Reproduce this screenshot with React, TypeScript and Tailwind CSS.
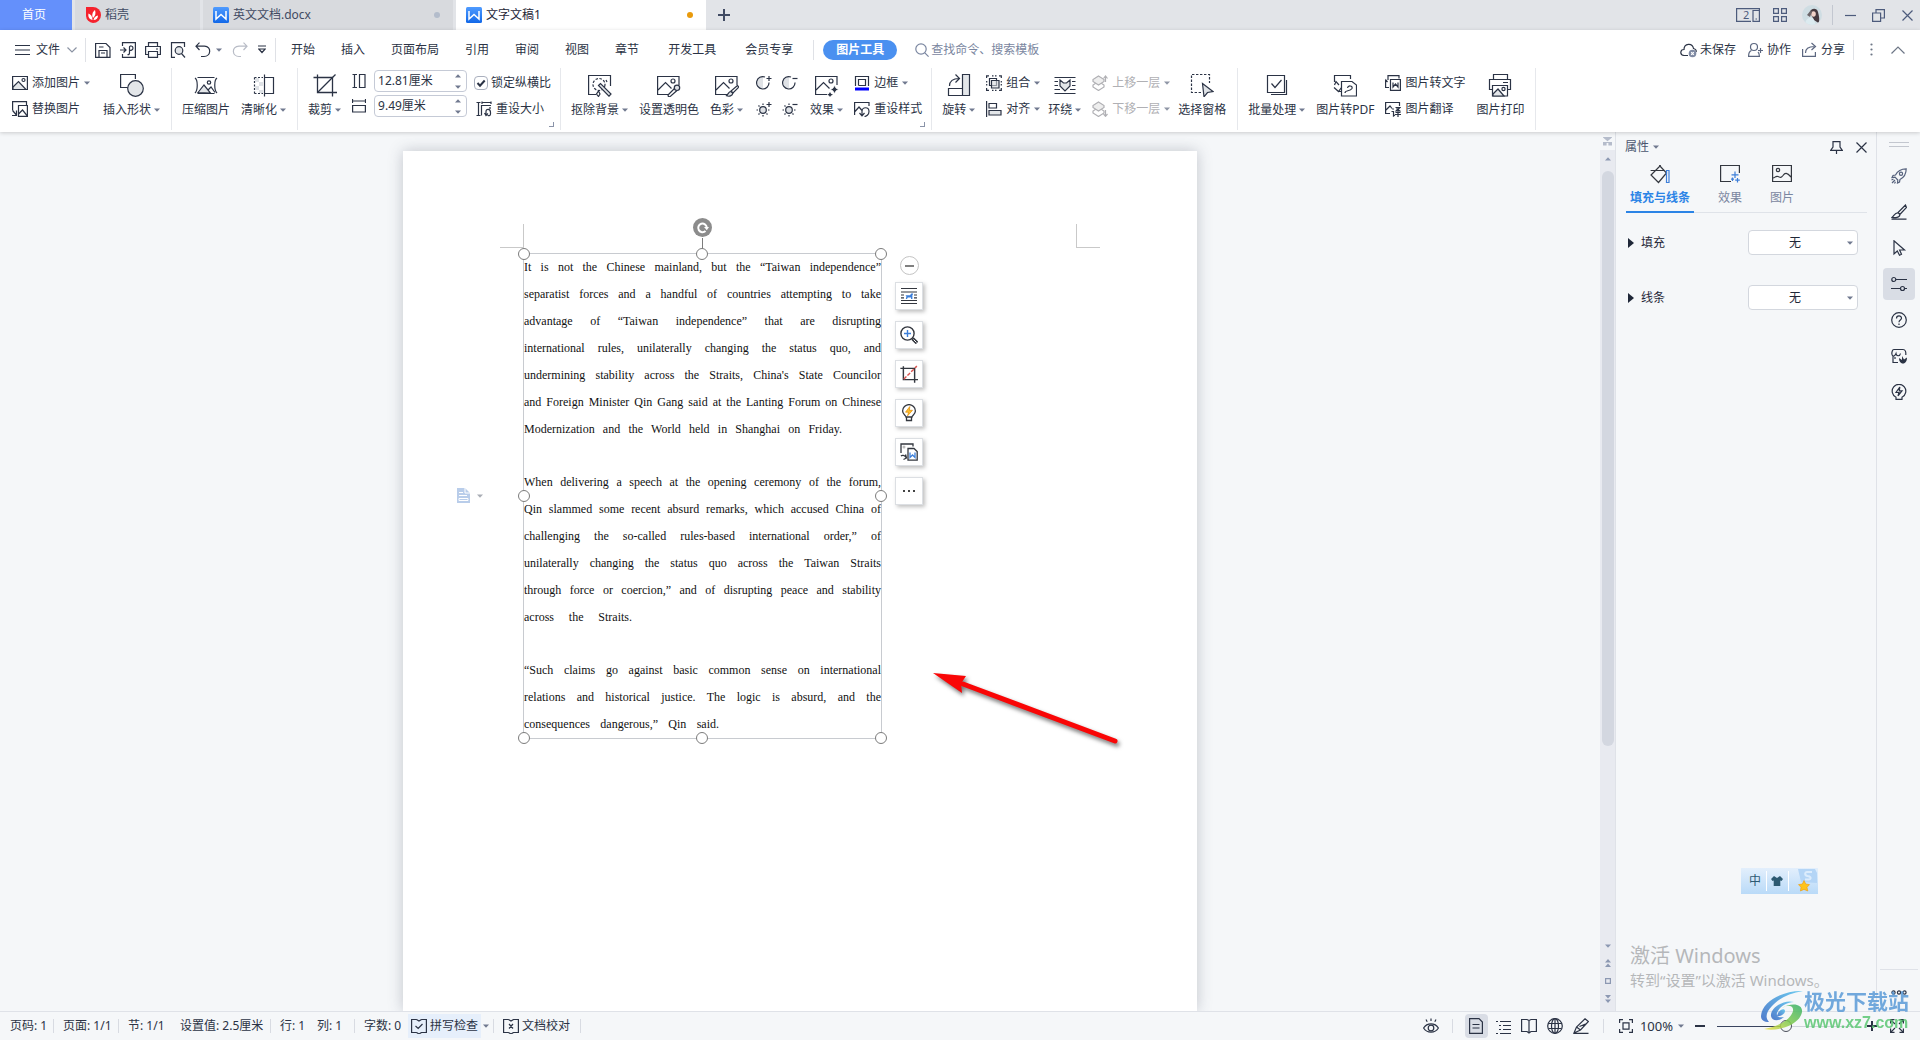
import React from "react";

type IconProps = { w?: number; h?: number; children: React.ReactNode; className?: string; sw?: number };

const Svg = ({ w = 16, h = w, children, className = "", sw = 1.2 }: IconProps) => (
  <svg
    width={w}
    height={h}
    viewBox={`0 0 ${w} ${h}`}
    fill="none"
    stroke="currentColor"
    strokeWidth={sw}
    className={`shrink-0 ${className}`}
    aria-hidden="true"
  >
    {children}
  </svg>
);

const Caret = ({ className = "text-[#70798f]" }: { className?: string }) => (
  <svg width="6" height="4" viewBox="0 0 6 4" className={`shrink-0 ${className}`} aria-hidden="true">
    <path d="M0 0.5H6L3 3.8Z" fill="currentColor" />
  </svg>
);

/* ---------- large ribbon icons (24 x 24) ---------- */
const ShapesIcon = () => (
  <Svg w={24}>
    <path d="M8 14.5H0.6V1.5H15.4V6" />
    <circle cx="15.5" cy="15.5" r="7.8" fill="#e3e6e9" />
  </Svg>
);
const CompressIcon = () => (
  <Svg w={24}>
    <path d="M1 5C4 7 4 17 1 20M23 5C20 7 20 17 23 20" />
    <path d="M3.5 4.5H20.5M3.5 20.5H20.5" />
    <path d="M4 19.5L10 12L16.5 20Z" fill="#e3e6e9" />
    <path d="M14 17L17 14L21 19.5" />
    <circle cx="15" cy="9.5" r="1.7" />
  </Svg>
);
const SharpenIcon = () => (
  <Svg w={24}>
    <path d="M2.5 4.5H11M2.5 20.5H11M2.5 4.5V20.5" strokeDasharray="2 1.5" />
    <path d="M3 5H7V9H3ZM7 9H11V13H7ZM3 13H7V17H3ZM7 17H11V20H7Z" fill="#dfe2e6" stroke="none" />
    <path d="M12.5 4.5H21.5V20.5H12.5M12.5 1.5V23.5" />
  </Svg>
);
const CropIcon = ({ diag = "currentColor", s = 24, dash }: { diag?: string; s?: number; dash?: string }) => (
  <svg width={s} height={s} viewBox="0 0 24 24" fill="none" stroke="currentColor" strokeWidth={s < 24 ? 1.9 : 1.3} aria-hidden="true">
    <path d="M0.5 4.5H19.5V23.5M4.5 1.5V19.5H24" />
    <path d="M5 19L22.5 1.5" stroke={diag} strokeDasharray={dash} />
  </svg>
);
const CutoutIcon = () => (
  <Svg w={24}>
    <path d="M8 21.5H0.6V2.5H22.5V13" />
    <circle cx="11" cy="11.5" r="6" strokeDasharray="2.5 1.5" />
    <path d="M10.5 12.5L12.5 10.5L23 21L21 23.2Z" fill="#e3e6e9" />
    <path d="M10.5 18L12 21L10.5 23.5L8.5 21ZM18 7L19 9" />
  </Svg>
);
const PictureBase = () => (
  <>
    <path d="M12 21.5H0.6V3.5H22V12" />
    <path d="M1 17L8.5 9.5L14.5 15.5" />
    <circle cx="16" cy="8" r="2" />
  </>
);
const TransparentIcon = () => (
  <Svg w={24}>
    <PictureBase />
    <path d="M17.5 15.5L11 22L11.5 24L13.5 23.3L20 17.5" fill="#fff" />
    <circle cx="20" cy="14.8" r="2.7" fill="#dfe2e6" />
  </Svg>
);
const ColorIcon = () => (
  <Svg w={24}>
    <PictureBase />
    <path d="M22.5 12.5L16 18L18 20L24 14Z" fill="#fff" />
    <path d="M16 18.5C13.5 18.5 13.5 21 11.5 22.8C14 23.8 17.5 23 17.8 20.2Z" fill="#e3e6e9" />
  </Svg>
);
const EffectIcon = () => (
  <Svg w={24}>
    <PictureBase />
    <path d="M19.5 12.5L21 15.2L23.5 16.5L21 17.8L19.5 20.5L18 17.8L15.5 16.5L18 15.2Z" fill="#2b3345" stroke="#fff" strokeWidth=".6" />
    <path d="M15 19L16 20.8L18 21.7L16 22.6L15 24L14 22.6L12.2 21.7L14 20.8Z" fill="#2b3345" stroke="none" />
  </Svg>
);
const RotateIcon = () => (
  <Svg w={24}>
    <path d="M15.5 1.5H22.5V22.5H15.5Z" fill="#e3e6e9" />
    <path d="M15.5 15.5H1.5V22.5H15.5M2.5 13C2.5 8 6 5.5 12 5.5M8.5 1.5L12.5 5.5L8.5 9.5" />
  </Svg>
);
const WrapIcon = () => (
  <Svg w={24}>
    <path d="M1.5 4.5H22.5M1.5 8.5H5M19 8.5H22.5M1.5 12.5H5M19 12.5H22.5M1.5 16.5H7M17 16.5H22.5M1.5 20.5H22.5" />
    <path d="M7 7L10.5 10H13.5L17 7V13L12 18L7 13Z" fill="#e3e6e9" />
  </Svg>
);
const SelectPaneIcon = () => (
  <Svg w={24}>
    <path d="M11 19.5H1.5V1.5H19.5V10" strokeDasharray="2.4 1.6" />
    <path d="M12.5 10.5L23 18.5L17.5 19.5L14 23.8Z" fill="#dfe2e6" />
  </Svg>
);
const BatchIcon = () => (
  <Svg w={24}>
    <path d="M2.5 2.5H19.5V19.5H2.5Z" />
    <path d="M21.5 7V21.5H6" />
    <path d="M6.5 10.5L10 14.5L16.5 7" />
  </Svg>
);
const ToPdfIcon = () => (
  <Svg w={24}>
    <path d="M1.5 9V2.5H17.5V6M9 18.5H6M1.5 12L3 8.5L6 12M1 14.5L5.5 18.5L8.5 14.5" />
    <path d="M8.5 8.5H19L23.5 12V23H8.5Z" fill="#fff" />
    <path d="M12 20C12 16.5 17 19 19 15.5C20 12.5 15 12 14.5 15" />
  </Svg>
);
const PrintPicIcon = () => (
  <Svg w={24}>
    <path d="M5.5 6.5V1.5H19.5V6.5M4.5 16.5H1.5V6.5H22.5V16.5H20M15 9.5H20" />
    <path d="M4.5 12.5H19.5V23H4.5Z" fill="#fff" />
    <path d="M5 21L10 16L16 23H5Z" fill="#e3e6e9" />
    <circle cx="15.5" cy="16" r="1.6" />
  </Svg>
);

/* ---------- small ribbon icons (16 x 16) ---------- */
const AddPicIcon = () => (
  <Svg>
    <path d="M0.6 1.5H15.4V14.5H0.6Z" />
    <path d="M1 12L6.5 6.5L14 14.5H1Z" fill="#e3e6e9" />
    <circle cx="11.5" cy="5" r="1.5" />
  </Svg>
);
const ReplacePicIcon = () => (
  <Svg>
    <path d="M0.6 9.5V0.6H14.5V4" />
    <path d="M6.5 4.5H15.4V15.4H6.5Z" fill="#fff" />
    <path d="M6.5 13L10.5 9L15.4 15M0.6 9.5L4 13.5M4.5 9.5V14.5H0" />
  </Svg>
);
const HeightIcon = () => (
  <Svg w={14} h={18}>
    <path d="M0.5 2.5H5M0.5 15.5H5M2.5 2.5V15.5M7.5 2.5H13V15.5H7.5Z" />
  </Svg>
);
const WidthIcon = () => (
  <Svg w={14} h={18}>
    <path d="M0.5 2V6M13.5 2V6M0.5 4H13.5M0.6 8.5H13.4V15H0.6Z" />
  </Svg>
);
const ResetSizeIcon = () => (
  <Svg>
    <path d="M0.5 1.5H4.5M0.5 14.5H4.5M2.5 1.5V14.5M5.5 14.5V4.5H15M6 0.5V3M15 0.5V3M6 1.5H15M14 6V8" />
    <path d="M10 14.5V10.5C10 7.5 14.5 7.5 14.5 11.5V13C14.5 15 12 15.2 12 14M8.5 12L10 14.5L12 12.5" />
  </Svg>
);
const ContrastIcon = ({ plus }: { plus?: boolean }) => (
  <Svg>
    <path d="M7 2A6 6 0 0 0 7 14Z" fill="#dfe2e6" stroke="none" />
    <path d="M9 2A6.2 6.2 0 1 0 13 7.5" />
    <path d={plus ? "M10.5 3.5H15.5M13 1V6" : "M10.5 3.5H15.5"} />
  </Svg>
);
const BrightnessIcon = ({ plus }: { plus?: boolean }) => (
  <Svg>
    <circle cx="7" cy="9" r="3.3" fill="#dfe2e6" />
    <path d="M7 2.5V4M7 14V15.5M0.5 9H2M12 9H13.5M2.5 4.5L3.5 5.5M2.5 13.5L3.5 12.5M11.5 13.5L10.5 12.5" />
    <path d={plus ? "M10.5 3.5H15.5M13 1V6" : "M10.5 3.5H15.5"} />
  </Svg>
);
const BorderIcon = () => (
  <Svg>
    <path d="M1.5 11V1.5H14.5V11M4.5 10.5V4.5H11.5V10.5H4.5" />
    <path d="M1 14H15" stroke="#0000ff" strokeWidth="3" />
  </Svg>
);
const ResetStyleIcon = () => (
  <Svg>
    <path d="M0.6 14V1.5H15V5M1 10.5L5 6L8 9.5" />
    <path d="M8 14.5V10.5C8 5.5 15 5.5 15 10.5C15 14 12 15.5 10.5 15.5M5.5 12L8 14.8L10.5 12" />
  </Svg>
);
const GroupIcon = () => (
  <Svg>
    <path d="M3.5 3.5H10.5V10.5H3.5Z" />
    <path d="M5.5 5.5H13V13H5.5Z" fill="#d5d9de" fillOpacity=".6" />
    <path d="M0.6 3V0.8H3M13 0.8H15.3V3M15.3 13V15.3H13M3 15.3H0.6V13M6 0.8H7.5M9 0.8H10.5M0.7 6V7.5M0.7 9V10.5M15.3 6V7.5M15.3 9V10.5M6 15.3H7.5M9 15.3H10.5" />
  </Svg>
);
const AlignIcon = () => (
  <Svg>
    <path d="M0.6 0V16M3 2.5H10.5V7H3Z" />
    <path d="M3 9.5H15V14H3Z" fill="#e3e6e9" />
  </Svg>
);
const LayerIcon = ({ up }: { up?: boolean }) => (
  <Svg>
    <path d="M6.5 6.5L12 10V12L6.5 15.5L1 12V10Z" fill={up ? "none" : "#fff"} />
    <path d="M6.5 1L12 4.5V6.5L6.5 10L1 6.5V4.5Z" fill="#eeeeee" />
    <path d={up ? "M13.5 7V1.5M11.5 3.5L13.5 1L15.5 3.5" : "M13.5 9V15M11.5 13L13.5 15.3L15.5 13"} />
  </Svg>
);
const ToWordIcon = () => (
  <Svg>
    <path d="M3 5V0.6H14V3.5M0.6 5V13M2.5 7L0.8 5L0 7M4 12.5H0.6" />
    <path d="M5.5 4.5H15.4V15.4H5.5Z" fill="#fff" />
    <path d="M8 7.5V12L10.5 9L13 12V7.5" />
  </Svg>
);
const TranslatePicIcon = () => (
  <Svg>
    <path d="M5 12.5H0.6V1.5H14.5V5M1 9L5 5L7 7.5" />
    <path d="M7.5 7.5L8.5 8.5M6.5 10.5H8.5V15L10 14M10.5 6.5H15L10.5 10.5M11.5 7.5L15.5 10.5M13 9.5V16M10.5 11.5H15.5M10 13.5H16" />
  </Svg>
);

/* ---------- brand marks ---------- */
const WpsLogo = () => (
  <svg width="16" height="16" viewBox="0 0 16 16" aria-hidden="true" className="shrink-0">
    <defs>
      <linearGradient id="wps" x1="0" y1="0" x2="0" y2="1">
        <stop offset="0" stopColor="#4f9bff" />
        <stop offset="1" stopColor="#1268e8" />
      </linearGradient>
    </defs>
    <rect width="16" height="16" rx="1.5" fill="url(#wps)" />
    <path d="M3 4V12L8 7.5L13 12V4" fill="none" stroke="#fff" strokeWidth="1.5" />
  </svg>
);
const DaokeLogo = () => (
  <svg width="16" height="16" viewBox="0 0 16 16" aria-hidden="true" className="shrink-0">
    <path d="M1 0H8A8 8 0 0 1 8 16A7.5 7.5 0 0 1 1 9Z" fill="#f5222d" />
    <path d="M7.5 13C3.5 12 3 9 3.5 6.5C6 7.5 7.5 9.5 7.5 13ZM8 11C6.5 8 7.5 5 10 3C11 6 10.5 9 8 11ZM8.5 13C9 10.5 10.5 9 13 8.5C13 11 11.5 13 8.5 13Z" fill="#fff" />
  </svg>
);

/* ---------- building blocks ---------- */
const Big = ({ icon, label, caret }: { icon: React.ReactNode; label: string; caret?: boolean }) => (
  <button type="button" className="flex shrink-0 flex-col items-center gap-[5px] pt-[5px]">
    <span className="flex h-6 items-center">{icon}</span>
    <span className="flex items-center gap-[3px] leading-4 whitespace-nowrap">
      {label}
      {caret && <Caret />}
    </span>
  </button>
);

const Small = ({ icon, label, caret, disabled }: { icon: React.ReactNode; label: string; caret?: boolean; disabled?: boolean }) => (
  <button
    type="button"
    disabled={disabled}
    className={`flex h-[22px] items-center gap-1 whitespace-nowrap ${disabled ? "text-[#b0b0b4]" : ""}`}
  >
    {icon}
    <span>{label}</span>
    {caret && <Caret className={disabled ? "text-[#8f96a6]" : "text-[#70798f]"} />}
  </button>
);

const Stack = ({ className = "", children }: { className?: string; children: React.ReactNode }) => (
  <div className={`flex shrink-0 flex-col gap-1 pt-1 ${className}`}>{children}</div>
);

const Sep = () => <div className="-mr-px h-[62px] w-px shrink-0 bg-[#e6e8ec]" />;

const Corner = () => (
  <span className="absolute top-[54px] -right-[5px] h-[5px] w-[5px] border-r border-b border-[#8a93a8]" />
);

const SizeField = ({ id, label, value, icon }: { id: string; label: string; value: string; icon: React.ReactNode }) => (
  <div className="flex h-[22px] items-center gap-2">
    <label htmlFor={id} aria-label={label}>{icon}</label>
    <div className="flex h-[22px] w-[93px] items-center rounded-sm border border-[#c5cad6] bg-white">
      <input id={id} defaultValue={value} className="min-w-0 flex-1 pl-[3px] outline-none" />
      <div className="flex w-4 flex-col items-center gap-[7px]">
        <button type="button" aria-label={`增大${label}`} className="rotate-180"><Caret /></button>
        <button type="button" aria-label={`减小${label}`}><Caret /></button>
      </div>
    </div>
  </div>
);

const Ribbon = () => (
  <div className="flex h-16 items-start gap-[11px] overflow-hidden pl-3">
    <Stack className="w-[80px]">
      <Small icon={<AddPicIcon />} label="添加图片" caret />
      <Small icon={<ReplacePicIcon />} label="替换图片" />
    </Stack>
    <Big icon={<ShapesIcon />} label="插入形状" caret />
    <Sep />
    <Big icon={<CompressIcon />} label="压缩图片" />
    <Big icon={<SharpenIcon />} label="清晰化" caret />
    <Sep />
    <Big icon={<CropIcon />} label="裁剪" caret />
    <div className="relative flex w-[197px] shrink-0 gap-[7px]">
      <div className="flex flex-col gap-[3px] pt-0.5">
        <SizeField id="h" label="高度" value="12.81厘米" icon={<HeightIcon />} />
        <SizeField id="w" label="宽度" value="9.49厘米" icon={<WidthIcon />} />
      </div>
      <Stack>
        <label className="flex h-[22px] items-center gap-[3px] whitespace-nowrap">
          <span className="relative flex h-[14px] w-[14px]">
            <input type="checkbox" defaultChecked className="h-[14px] w-[14px] appearance-none rounded-sm border border-[#aab0be] bg-white" />
            <Svg w={14} className="pointer-events-none absolute inset-0" sw={2}>
              <path d="M3.5 7L6 9.7L10.7 4.5" />
            </Svg>
          </span>
          锁定纵横比
        </label>
        <div className="pl-0.5">
          <Small icon={<ResetSizeIcon />} label="重设大小" />
        </div>
      </Stack>
      <Corner />
    </div>
    <Sep />
    <Big icon={<CutoutIcon />} label="抠除背景" caret />
    <Big icon={<TransparentIcon />} label="设置透明色" />
    <Big icon={<ColorIcon />} label="色彩" caret />
    <div className="grid w-[45px] shrink-0 grid-cols-2 gap-x-[9px] gap-y-1 pt-1 pl-0.5">
      <button type="button" aria-label="增加对比度" className="flex h-[22px] items-center"><ContrastIcon plus /></button>
      <button type="button" aria-label="降低对比度" className="flex h-[22px] items-center"><ContrastIcon /></button>
      <button type="button" aria-label="增加亮度" className="flex h-[22px] items-center"><BrightnessIcon plus /></button>
      <button type="button" aria-label="降低亮度" className="flex h-[22px] items-center"><BrightnessIcon /></button>
    </div>
    <Big icon={<EffectIcon />} label="效果" caret />
    <div className="relative w-[66px] shrink-0">
      <Stack>
        <Small icon={<BorderIcon />} label="边框" caret />
        <Small icon={<ResetStyleIcon />} label="重设样式" />
      </Stack>
      <Corner />
    </div>
    <Sep />
    <Big icon={<RotateIcon />} label="旋转" caret />
    <Stack className="w-[51px]">
      <Small icon={<GroupIcon />} label="组合" caret />
      <Small icon={<AlignIcon />} label="对齐" caret />
    </Stack>
    <Big icon={<WrapIcon />} label="环绕" caret />
    <Stack className="w-[75px]">
      <Small icon={<LayerIcon up />} label="上移一层" caret disabled />
      <Small icon={<LayerIcon />} label="下移一层" caret disabled />
    </Stack>
    <Big icon={<SelectPaneIcon />} label="选择窗格" />
    <Sep />
    <Big icon={<BatchIcon />} label="批量处理" caret />
    <Big icon={<ToPdfIcon />} label="图片转PDF" />
    <Stack>
      <Small icon={<ToWordIcon />} label="图片转文字" />
      <Small icon={<TranslatePicIcon />} label="图片翻译" />
    </Stack>
    <Big icon={<PrintPicIcon />} label="图片打印" />
    <Sep />
  </div>
);

const TitleBar = () => (
  <header className="flex h-[30px] shrink-0 items-stretch bg-[#e2e4e8] text-[#414b63]">
    <button type="button" className="w-[72px] bg-[#6490fb] pr-1 text-white">首页</button>
    <button type="button" className="ml-[3px] flex w-[125px] items-center gap-1 bg-[#d8dade] pl-[10px]">
      <DaokeLogo />
      <span>稻壳</span>
    </button>
    <button type="button" className="ml-[3px] flex w-[250px] items-center gap-1 bg-[#d8dade] px-[10px]">
      <WpsLogo />
      <span>英文文档.docx</span>
      <span className="mr-[3px] ml-auto h-1.5 w-1.5 rounded-full bg-[#b3bccb]" />
    </button>
    <button type="button" className="ml-[3px] flex w-[250px] items-center gap-1 bg-white px-[10px] text-[#1f2738]">
      <WpsLogo />
      <span>文字文稿1</span>
      <span className="mr-[3px] ml-auto h-1.5 w-1.5 rounded-full bg-[#e99a0c]" />
    </button>
    <button type="button" aria-label="新建" className="ml-3 flex items-center">
      <Svg w={12} sw={2}><path d="M6 0V12M0 6H12" /></Svg>
    </button>
    <div className="ml-auto flex items-center text-[#4d5b7c]">
      <button type="button" aria-label="双页窗口" className="relative flex">
        <Svg w={24} h={14}>
          <path d="M15 13.4H0.6V0.6H23.4V13.4H17V2.5H23M19.5 11H21" />
        </Svg>
        <span className="absolute top-0 left-[7px] text-[11px] leading-[14px]">2</span>
      </button>
      <button type="button" aria-label="应用" className="ml-[13px]">
        <Svg w={14}>
          <path d="M0.6 0.6H5.4V5.4H0.6ZM8.6 0.6H13.4V5.4H8.6ZM0.6 8.6H5.4V13.4H0.6ZM8.6 8.6H13.4V13.4H8.6Z" />
        </Svg>
      </button>
      <button type="button" aria-label="账户" className="ml-[15px]">
        <svg width="20" height="20" viewBox="0 0 20 20" aria-hidden="true">
          <clipPath id="av"><circle cx="10" cy="10" r="10" /></clipPath>
          <g clipPath="url(#av)">
            <rect width="20" height="20" fill="#cfdde3" />
            <path d="M8 8C8 3 15 2 16 7C17 11 18 15 16.5 18L12 15Z" fill="#453a40" />
            <ellipse cx="11.5" cy="9" rx="2.3" ry="2.8" fill="#f0d2c8" />
            <path d="M3 20C3 14 8 11 11 13L14 20Z" fill="#dcebf0" />
            <path d="M5 10L9 5L10 7L8 12Z" fill="#6a6468" />
          </g>
        </svg>
      </button>
      <span className="ml-[10px] h-5 w-px bg-[#c3c7d0]" />
      <button type="button" aria-label="最小化" className="ml-3 flex">
        <Svg w={11} sw={1.2}><path d="M0 5.5H11" /></Svg>
      </button>
      <button type="button" aria-label="还原" className="ml-4">
        <Svg w={13}><path d="M0.6 4H8.6V12.4H0.6ZM4 4V0.6H12.4V9H8.6" /></Svg>
      </button>
      <button type="button" aria-label="关闭" className="mr-[7px] ml-[17px]">
        <Svg w={11}><path d="M0.5 0.5L10.5 10.5M10.5 0.5L0.5 10.5" /></Svg>
      </button>
    </div>
  </header>
);

const MenuBar = () => (
  <nav className="flex h-[38px] items-center pt-px whitespace-nowrap">
    <button type="button" className="ml-[15px] flex items-center gap-1.5">
      <Svg w={15} h={12}><path d="M0 1.5H15M0 6H15M0 10.5H15" /></Svg>
      文件
      <Svg w={10} h={6} className="ml-px text-[#8b93a3]"><path d="M0.5 0.5L5 5L9.5 0.5" /></Svg>
    </button>
    <span className="ml-[8px] h-6 w-px bg-[#dfe1e6]" />
    <button type="button" aria-label="保存" className="ml-[9px]">
      <Svg><path d="M0.6 1.5H11L15 5.5V15.4H0.6ZM4 15V8.5H12V15M4 5H8.5M6 11H10" /></Svg>
    </button>
    <button type="button" aria-label="输出为PDF" className="ml-[9px]">
      <Svg><path d="M2.5 4V0.6H15.4V15.4H2.5V12M0 8H5.5M3.5 5.5L6 8L3.5 10.5M7.5 12.5C9 13 9.5 12 9.5 10.5V5C9.5 3.5 13 3.5 13 6C13 8.5 10.5 8.5 9.5 8" /></Svg>
    </button>
    <button type="button" aria-label="打印" className="ml-[9px]">
      <Svg><path d="M3.5 4.5V0.6H12.5V4.5M3.5 12.5H0.6V4.5H15.4V12.5H12.5M3.5 9.5H12.5V15.4H3.5ZM11 7H13" /></Svg>
    </button>
    <button type="button" aria-label="打印预览" className="ml-[9px]">
      <Svg>
        <path d="M5 15.4H1.5V0.6H14.5V5" />
        <circle cx="9" cy="8.5" r="3.8" fill="#e3e6e9" />
        <path d="M11.5 11.5L15 15.5" />
      </Svg>
    </button>
    <button type="button" aria-label="撤销" className="ml-[9px] flex items-center gap-[5px]">
      <Svg><path d="M4.5 0.6L1 4.2L4.5 8M1 4.2H9.5C17 4.5 16 14.5 9 14.5H6" /></Svg>
      <Caret />
    </button>
    <button type="button" aria-label="恢复" className="ml-[10px] text-[#b8bcc6]">
      <Svg><path d="M11.5 0.6L15 4.2L11.5 8M15 4.2H7C-1 4.5 0 14.5 7 14.5H9" /></Svg>
    </button>
    <button type="button" aria-label="更多" className="ml-[10px]">
      <Svg w={8} h={9}><path d="M0 1H8M0.8 4L4 7.5L7.2 4Z" /></Svg>
    </button>
    <span className="ml-[9px] h-6 w-px bg-[#dfe1e6]" />
    <div className="ml-[15px] flex items-center gap-[26px]">
      {["开始", "插入", "页面布局", "引用", "审阅", "视图", "章节"].map((t) => (
        <button key={t} type="button">{t}</button>
      ))}
      <button type="button" className="ml-[3px]">开发工具</button>
      <button type="button" className="ml-[3px]">会员专享</button>
    </div>
    <span className="ml-[20px] h-5 w-px bg-[#dfe1e6]" />
    <button type="button" className="ml-[9px] h-5 w-[74px] rounded-full bg-[#4a90f0] font-bold text-white">图片工具</button>
    <label className="ml-[18px] flex items-center gap-0.5 text-[#7a86a0]">
      <Svg w={14}><circle cx="6" cy="6" r="5.2" /><path d="M9.8 9.8L13.6 13.6" /></Svg>
      <input aria-label="查找命令" placeholder="查找命令、搜索模板" className="w-40 outline-none placeholder:text-[#7a86a0]" />
    </label>
    <div className="ml-auto flex items-center">
      <button type="button" className="flex items-center gap-[3px]">
        <Svg w={17} h={16}>
          <path d="M8 13.5H4C-0.5 13 0 7.5 4 7.5C4 1 12.5 0.5 13.5 6.5C16 7 16.5 9 16 10" />
          <circle cx="12.5" cy="11.5" r="3.8" fill="#7f8aa3" stroke="none" />
          <path d="M11.2 10.2L13.8 12.8M13.8 10.2L11.2 12.8" stroke="#fff" />
        </Svg>
        未保存
      </button>
      <button type="button" className="ml-3 flex items-center gap-1">
        <Svg w={15} className="text-[#5c6780]">
          <circle cx="6" cy="5" r="3.5" />
          <path d="M3.5 8.5C0.5 9.5 0.6 12 0.6 14.4H11.4C11.4 12.5 11.2 11 10 10M10 8.5H15M12.5 6V11" />
        </Svg>
        协作
      </button>
      <button type="button" className="ml-[11px] flex items-center gap-1">
        <Svg w={15} className="text-[#5c6780]">
          <path d="M0.6 7V14.4H13.4V10M3.5 11C3.5 7 6 4.5 12.5 4.5M9.5 1L13.5 4.5L9.5 8" />
        </Svg>
        分享
      </button>
      <span className="ml-[8px] h-5 w-px bg-[#dfe1e6]" />
      <button type="button" aria-label="更多选项" className="ml-4">
        <svg width="3" height="13" viewBox="0 0 3 13" fill="#6d7686" aria-hidden="true">
          <circle cx="1.5" cy="1.5" r="1.1" /><circle cx="1.5" cy="6.5" r="1.1" /><circle cx="1.5" cy="11.5" r="1.1" />
        </svg>
      </button>
      <button type="button" aria-label="收起功能区" className="mr-[15px] ml-[18px]">
        <Svg w={14} h={8} className="text-[#6d7686]"><path d="M0.5 7.5L7 1L13.5 7.5" /></Svg>
      </button>
    </div>
  </nav>
);

/* ---------- document ---------- */
const PARAGRAPHS: { lines: string[]; last: string }[] = [
  {
    lines: [
      "It is not the Chinese mainland, but the “Taiwan independence”",
      "separatist forces and a handful of countries attempting to take",
      "advantage of “Taiwan independence” that are disrupting",
      "international rules, unilaterally changing the status quo, and",
      "undermining stability across the Straits, China's State Councilor",
      "and Foreign Minister Qin Gang said at the Lanting Forum on Chinese",
      "Modernization and the World held in Shanghai on Friday.",
    ],
    last: "w-[318px]",
  },
  {
    lines: [
      "When delivering a speech at the opening ceremony of the forum,",
      "Qin slammed some recent absurd remarks, which accused China of",
      "challenging the so-called rules-based international order,” of",
      "unilaterally changing the status quo across the Taiwan Straits",
      "through force or coercion,” and of disrupting peace and stability",
      "across the Straits.",
    ],
    last: "w-[108px]",
  },
  {
    lines: [
      "“Such claims go against basic common sense on international",
      "relations and historical justice. The logic is absurd, and the",
      "consequences dangerous,” Qin said.",
    ],
    last: "w-[195px]",
  },
];

const Handle = ({ className }: { className: string }) => (
  <span className={`absolute h-3 w-3 rounded-full border border-[#7c7c7c] bg-white ${className}`} />
);

const FloatBtn = ({ label, children }: { label: string; children: React.ReactNode }) => (
  <button
    type="button"
    aria-label={label}
    className="flex h-7 w-7 items-center justify-center border border-[#dcdfe3] bg-white text-[#33373f] shadow-[2px_2px_4px_rgba(0,0,0,0.25)]"
  >
    {children}
  </button>
);

const FloatingTools = () => (
  <div className="absolute top-[105px] left-[492px] flex flex-col items-center gap-[11px]">
    <button type="button" aria-label="收起" className="-mb-1 flex h-[19px] w-[19px] items-center justify-center rounded-full border border-[#c4c4c4] bg-white">
      <span className="h-0.5 w-[9px] bg-[#808080]" />
    </button>
    <FloatBtn label="布局选项">
      <Svg w={18}>
        <path d="M1 1.5H17M1 13.5H17M1 16.5H17M1 5H17M1 8H4M14 8H17M1 10.8H4M14 10.8H17" />
        <path d="M5.5 8.2H10L11.2 6.4H13V7.8H12.4V12H11V10.4H7.8L7 12H5.8L6.4 9.6Z" fill="#3d7fd9" stroke="none" />
      </Svg>
    </FloatBtn>
    <FloatBtn label="放大">
      <Svg w={18} sw={1.4}>
        <circle cx="7.5" cy="7.5" r="6.6" />
        <path d="M12.5 12.5L17 17" strokeWidth="3.4" />
        <path d="M13.5 13.5L16.5 16.5" stroke="#fff" strokeWidth="1" />
        <path d="M4 7.5H11M7.5 4V11" stroke="#3d7fd9" />
      </Svg>
    </FloatBtn>
    <FloatBtn label="裁剪"><CropIcon diag="#d9534f" s={18} dash="5 2" /></FloatBtn>
    <FloatBtn label="智能优化">
      <Svg w={18} sw={1.3}>
        <path d="M6 13C6 11.5 2.6 10.5 2.6 7A6.4 6.4 0 0 1 15.4 7C15.4 10.5 12 11.5 12 13ZM6.5 13V16.5H11.5V13" />
        <path d="M9.8 2.5L5.5 8.2H8.6L7.6 11.8L12.5 6.3H9.4Z" fill="#ffc02e" stroke="#e08a00" strokeWidth=".7" />
      </Svg>
    </FloatBtn>
    <FloatBtn label="图片转文字">
      <Svg w={18} sw={1.3}>
        <path d="M1 10V1H13V3.5M1 13C2 12 4.5 12 6 14.5M3.5 16.5L6.5 15L5.5 11.5" />
        <circle cx="4" cy="4" r="1.5" fill="#bbb" stroke="none" />
        <path d="M8 5.5H14L17.2 8.5V17.2H8Z" fill="#fff" />
        <path d="M10 9.5V14.5L12.5 12L15 14.5V9.5" stroke="#3d7fd9" />
      </Svg>
    </FloatBtn>
    <FloatBtn label="更多">
      <svg width="12" height="2" viewBox="0 0 12 2" fill="#444" aria-hidden="true">
        <path d="M0 0H2V2H0ZM5 0H7V2H5ZM10 0H12V2H10Z" />
      </svg>
    </FloatBtn>
  </div>
);

const Page = () => (
  <article className="relative h-full w-[794px] shrink-0 bg-white shadow-[0_0_14px_rgba(60,70,90,0.28)]">
    <span className="absolute top-[73px] left-[97px] h-6 w-6 border-r border-b border-[#c9c9c9]" />
    <span className="absolute top-[73px] left-[673px] h-6 w-6 border-b border-l border-[#c9c9c9]" />
    <div className="pt-[102px] pl-[120px]">
      <div className="relative h-[486px] w-[359px] border border-[#c8cbd0] font-['Liberation_Serif',serif] text-[12px] leading-[27px] text-[#111]">
        {PARAGRAPHS.map((p) => (
          <p key={p.last} className="mb-[26px]">
            {p.lines.map((l, i) => (
              <span
                key={l}
                className={`block [text-align-last:justify] whitespace-nowrap ${i === p.lines.length - 1 ? p.last : "w-full"}`}
              >
                {l}
              </span>
            ))}
          </p>
        ))}
        <span className="absolute -top-4 left-[178px] h-4 w-px bg-[#7c7c7c]" />
        <span className="absolute -top-9 left-[169px] flex h-[19px] w-[19px] items-center justify-center rounded-full bg-[#8c8c8c] text-white">
          <Svg w={13} sw={2}>
            <path d="M9.5 10A4.3 4.3 0 1 1 10.8 6.5" />
            <path d="M8 6H13L10.8 9.3Z" fill="currentColor" stroke="none" />
          </Svg>
        </span>
        <Handle className="-top-1.5 -left-1.5" />
        <Handle className="-top-1.5 left-[172px]" />
        <Handle className="-top-1.5 -right-1.5" />
        <Handle className="top-[236px] -left-1.5" />
        <Handle className="top-[236px] -right-1.5" />
        <Handle className="-bottom-1.5 -left-1.5" />
        <Handle className="-bottom-1.5 left-[172px]" />
        <Handle className="-right-1.5 -bottom-1.5" />
      </div>
    </div>
    <button type="button" aria-label="粘贴选项" className="absolute top-[337px] left-[54px] flex items-center gap-[7px]">
      <svg width="13" height="15" viewBox="0 0 13 15" aria-hidden="true">
        <path d="M0 0H8L13 5V15H0Z" fill="#b9cdea" />
        <path d="M8 0V5H13M2 4.5H6M2 7.5H10M2 10.5H11V12.5H2Z" fill="none" stroke="#fff" />
      </svg>
      <Caret className="text-[#a9adb5]" />
    </button>
    <FloatingTools />
    <svg
      width="200"
      height="90"
      viewBox="0 0 200 90"
      className="absolute top-[515px] left-[524px] drop-shadow-[2px_3px_2px_rgba(0,0,0,0.55)]"
      aria-hidden="true"
    >
      <path d="M36 18L188 75" stroke="#f90606" strokeWidth="5" strokeLinecap="round" />
      <path d="M6 7L39 10L34 17.5L35 27Z" fill="#f90606" />
    </svg>
  </article>
);

const ScrollBar = () => (
  <div className="flex w-[15px] shrink-0 flex-col items-center bg-[#e8eaf0] text-[#8c98b2]">
    <div className="flex h-[18px] w-full items-center justify-center bg-[#f5f7f9]">
      <Svg w={9} h={9} className="text-[#b5bccb]"><path d="M1 0.5H8L4.5 3.5ZM0.5 5.5H3V8H0.5ZM6 5.5H8.5V8H6ZM3.5 5.5H5.5" fill="currentColor" /></Svg>
    </div>
    <button type="button" aria-label="向上滚动" className="mt-[7px] rotate-180"><Caret className="text-[#8c98b2]" /></button>
    <div className="mt-2.5 h-[575px] w-3 rounded-full bg-[#d3d7e0]" />
    <div className="mt-auto mb-2 flex flex-col items-center gap-[11px]">
      <button type="button" aria-label="向下滚动"><Caret className="text-[#8c98b2]" /></button>
      <button type="button" aria-label="上一页">
        <Svg w={6} h={8}><path d="M0 3.5L3 0L6 3.5ZM0 8L3 4.5L6 8Z" fill="currentColor" stroke="none" /></Svg>
      </button>
      <button type="button" aria-label="浏览对象"><Svg w={6}><path d="M0.6 0.6H5.4V5.4H0.6Z" /></Svg></button>
      <button type="button" aria-label="下一页">
        <Svg w={6} h={8}><path d="M0 0L3 3.5L6 0ZM0 4.5L3 8L6 4.5Z" fill="currentColor" stroke="none" /></Svg>
      </button>
    </div>
  </div>
);

const PropRow = ({ id, label }: { id: string; label: string }) => (
  <div className="flex h-[25px] items-center pr-[9px] pl-[3px]">
    <svg width="6" height="10" viewBox="0 0 6 10" className="mr-[7px]" aria-hidden="true"><path d="M0 0L6 5L0 10Z" fill="#1f2738" /></svg>
    <label htmlFor={id}>{label}</label>
    <div className="relative ml-auto w-[110px]">
      <select id={id} className="h-[25px] w-full appearance-none rounded-sm border border-[#d3d7de] bg-white pr-4 text-center [text-align-last:center]">
        <option>无</option>
      </select>
      <span className="pointer-events-none absolute top-[11px] right-[5px] flex"><Caret /></span>
    </div>
  </div>
);

const PropsPanel = () => (
  <aside className="relative flex w-[261px] shrink-0 flex-col border-l border-[#dfe2e8] px-[9px]">
    <div className="mt-[6px] flex h-[18px] items-center text-[#4a556e]">
      <button type="button" className="flex items-center gap-1">属性 <Caret /></button>
      <button type="button" aria-label="固定" className="ml-auto text-[#2b3345]">
        <Svg w={13} h={13}><path d="M3 0.6H10V6L12.4 9.4H0.6L3 6ZM6.5 9.5V13" /></Svg>
      </button>
      <button type="button" aria-label="关闭面板" className="ml-[13px] text-[#2b3345]">
        <Svg w={11}><path d="M0.5 0.5L10.5 10.5M10.5 0.5L0.5 10.5" /></Svg>
      </button>
    </div>
    <div role="tablist" className="mt-2 ml-px flex items-start border-b border-[#dfe3e9] text-[#7a86a0]">
      <button type="button" role="tab" className="-mb-px flex h-[49px] w-[68px] flex-col items-center gap-[6px] border-b-2 border-[#2b84e6] font-bold text-[#2b84e6]">
        <Svg w={20} className="text-[#33373f]">
          <path d="M0.6 6.5H14M9.5 1.5L16.5 9L8.5 18.5L1 11L10.5 1.5" />
          <path d="M16.5 6.5H19V18.5H16.5Z" stroke="#3d7fd9" />
        </Svg>
        <span className="leading-4">填充与线条</span>
      </button>
      <button type="button" role="tab" className="ml-[24px] flex flex-col items-center gap-[6px]">
        <Svg w={20} className="text-[#33373f]">
          <path d="M11 17.5H0.6V1.5H19.4V9" />
          <path d="M15 7.5V14M11.5 10.8H18.5M17.5 14V18.5M15.2 16.2H19.8M12.5 13.5V17M11 15.2H14" stroke="#3d7fd9" />
        </Svg>
        <span className="leading-4">效果</span>
      </button>
      <button type="button" role="tab" className="ml-[28px] flex flex-col items-center gap-[6px]">
        <Svg w={20} className="text-[#33373f]">
          <path d="M0.6 1.5H19.4V17.5H0.6ZM1 14C3 14 3.5 11.5 6 12.5C8.5 13.5 9 14 11 11.5C13 8.5 15 8.5 19 13" />
          <circle cx="6" cy="6" r="1.7" />
        </Svg>
        <span className="leading-4">图片</span>
      </button>
    </div>
    <div className="mt-[17px] flex flex-col gap-[30px] text-[#1f2738]">
      <PropRow id="fill" label="填充" />
      <PropRow id="line" label="线条" />
    </div>
    <div className="mt-auto mb-[19px] pl-[5px] whitespace-nowrap text-[#b5b7ba]">
      <p className="text-[20px] leading-6">激活 Windows</p>
      <p className="text-[15px] leading-6">转到“设置”以激活 Windows。</p>
    </div>
    <div className="absolute right-[58px] bottom-[117px] flex h-[26px] w-[77px] items-center justify-between bg-linear-to-b from-[#e3effc] to-[#b9daf8] px-2 text-[#2d5a72]">
      <button type="button" aria-label="输入法">中</button>
      <span className="h-5 w-px bg-white" />
      <button type="button" aria-label="皮肤">
        <svg width="12" height="10" viewBox="0 0 12 10" aria-hidden="true"><path d="M3 0L6 2L9 0L12 3L10.5 5L9.3 4.5V10H2.7V4.5L1.5 5L0 3Z" fill="#2d5a72" /></svg>
      </button>
      <span className="h-5 w-px bg-white" />
      <button type="button" aria-label="工具箱" className="-mr-2">
        <svg width="24" height="24" viewBox="0 0 24 24" aria-hidden="true">
          <path d="M4 0H21L23 4V14L7 13Z" fill="#b4d5f6" />
          <path d="M18 3H13C10.5 3 10.5 6.5 13.5 7C17.5 7.5 17.5 10.5 14.5 10.5H11" stroke="#dcecfc" strokeWidth="2" fill="none" />
          <path d="M10 11.5L11.8 15L15.5 15.6L13 18.3L13.8 22L10 20.4L6.4 22L7 18.3L4.5 15.6L8.3 15Z" fill="#ffc31a" stroke="#f09a0a" strokeWidth=".6" />
        </svg>
      </button>
    </div>
  </aside>
);

const SideBtn = ({ label, active, children }: { label: string; active?: boolean; children: React.ReactNode }) => (
  <button type="button" aria-label={label} className={`flex h-8 w-8 items-center justify-center rounded-sm ${active ? "bg-[#d9dde5]" : ""}`}>
    {children}
  </button>
);

const SideBar = () => (
  <aside className="flex w-[44px] shrink-0 flex-col items-center gap-1 border-l border-[#dfe2e8]">
    <span className="mt-[10px] mb-[9px] h-[5px] w-5 border-y border-[#c3c7cf]" />
    <SideBtn label="快捷">
      <Svg className="text-[#55617c]">
        <path d="M15.2 0.8C10 0.8 6.5 3 4.5 7L2 7.5L1 9.5L4 9.2L6.8 12L6.5 15L8.5 14L9 11.5C13 9.5 15.2 6 15.2 0.8Z" />
        <circle cx="10" cy="5.8" r="1.6" /><path d="M0.5 12L2.5 11M1 15L4 12M3.5 15.5L4.5 13.8" />
      </Svg>
    </SideBtn>
    <SideBtn label="格式">
      <Svg><path d="M14.5 1L7 8.5L8.8 10.5L15.5 3.5ZM7 8.8C4 8.5 3.5 11 1 13.5C4 14 9 13.8 8.8 10.5M0.5 15.2H15.5" /></Svg>
    </SideBtn>
    <SideBtn label="选择">
      <Svg><path d="M3 0.8V14L6.3 11L8.5 15.2L10.5 14.2L8.6 10H13.5Z" /></Svg>
    </SideBtn>
    <SideBtn label="属性" active>
      <Svg><circle cx="2.8" cy="3.5" r="2" /><path d="M4.8 3.5H16M0 12.5H9.5M13.5 12.5H16" /><circle cx="11.5" cy="12.5" r="2" /></Svg>
    </SideBtn>
    <SideBtn label="帮助">
      <Svg><circle cx="8" cy="8" r="7.3" /><path d="M5.5 6.5C5.5 3 10.5 3 10.5 6.3C10.5 8 8 8.2 8 10.2M8 11.5V13" /></Svg>
    </SideBtn>
    <SideBtn label="素材库">
      <Svg>
        <path d="M7 14.5H2V8M2 8C0 7 0.8 1.5 3 1.5H12C14.5 1.5 15 4 14.8 7M2 8C4 8.5 4.5 6.5 5 5.5C5.5 8.5 9 8.5 9.5 5.5M4 11V9" />
        <path d="M8 10L11 12V8L13 11.5L16 9.5C16 13 14.5 15.5 12 15.5C9.5 15.5 8 13 8 10Z" fill="currentColor" stroke="none" />
      </Svg>
    </SideBtn>
    <SideBtn label="灵感">
      <Svg><path d="M5 13.2A6.8 6.8 0 1 1 11 13.2V15.3H5Z" /><path d="M8.8 3L5 8.5H8L7 11.8L11 6.8H8.3Z" /></Svg>
    </SideBtn>
    <span className="mt-auto h-px w-[38px] bg-[#dfe2e8]" />
    <button type="button" aria-label="更多面板" className="mt-[16px] mb-4">
      <Svg w={16} h={5}><circle cx="2.5" cy="2.5" r="1.6" /><circle cx="8" cy="2.5" r="1.6" /><circle cx="13.5" cy="2.5" r="1.6" /></Svg>
    </button>
  </aside>
);

const VSep = ({ className = "" }: { className?: string }) => <span className={`h-[14px] w-px shrink-0 bg-[#d8dbe2] ${className}`} />;

const StatusBar = () => (
  <footer className="flex h-[29px] shrink-0 items-center border-t border-[#dfe2e8] whitespace-nowrap text-[#2b3345]">
    <span className="w-[43px] pl-[10px]">页码: 1</span>
    <VSep className="ml-[10px]" />
    <span className="ml-[9px] w-[55px]">页面: 1/1</span>
    <VSep />
    <span className="ml-[9px] w-[52px]">节: 1/1</span>
    <span className="w-[90px]">设置值: 2.5厘米</span>
    <VSep />
    <span className="ml-[9px] w-[37px]">行: 1</span>
    <span className="w-[37px]">列: 1</span>
    <VSep />
    <span className="ml-[9px] w-[44px]">字数: 0</span>
    <button type="button" className="flex h-6 items-center gap-[3px] bg-[#e6effb] px-[3px]">
      <Svg><path d="M5.5 1.5H0.6V14.5H5.5M10.5 1.5H15.4V14.5H10.5M5.5 1.5L8 3L10.5 1.5M5.5 14.5L8 16L10.5 14.5M4.5 8L7.2 10.5L11.5 6" /></Svg>
      拼写检查
    </button>
    <button type="button" aria-label="拼写检查选项" className="ml-[2px]"><Caret /></button>
    <VSep className="ml-[4px]" />
    <button type="button" className="ml-[9px] flex items-center gap-[3px]">
      <Svg><path d="M5.5 1.5H0.6V14.5H5.5M10.5 1.5H15.4V14.5H10.5M5.5 1.5L8 3L10.5 1.5M5.5 14.5L8 16L10.5 14.5M6 6L10 10.5M10 6L6 10.5" /></Svg>
      文档校对
    </button>
    <VSep className="ml-[10px]" />
    <div className="mr-[16px] ml-auto flex items-center">
      <button type="button" aria-label="护眼模式">
        <Svg w={16}><path d="M0.6 10C4 4.5 12 4.5 15.4 10C12 15.5 4 15.5 0.6 10ZM8 0.5V3M3 1.5L4.2 3.8M13 1.5L11.8 3.8" /><circle cx="8" cy="10" r="2.8" /></Svg>
      </button>
      <VSep className="ml-[13px]" />
      <button type="button" aria-label="页面视图" className="ml-[12px] flex h-6 w-[23px] items-center justify-center rounded-sm bg-[#d9dde5]">
        <Svg w={14} h={16}><path d="M0.6 0.6H10L13.4 4V15.4H0.6ZM3.5 6.5H10.5M3.5 10H10.5" /></Svg>
      </button>
      <button type="button" aria-label="大纲" className="ml-[8px]">
        <Svg w={15}><path d="M0 2.5H2M4 2.5H15M3 6.5H5M7 6.5H15M3 10.5H5M7 10.5H15M0 14.5H2M4 14.5H15" /></Svg>
      </button>
      <button type="button" aria-label="阅读版式" className="ml-[10px]">
        <Svg w={16}><path d="M8 2.5L6 1.5H0.6V13.5H6L8 15L10 13.5H15.4V1.5H10L8 2.5V14.5" /></Svg>
      </button>
      <button type="button" aria-label="Web 版式" className="ml-[10px]">
        <Svg w={16}><circle cx="8" cy="8" r="7.3" /><ellipse cx="8" cy="8" rx="3.5" ry="7.3" /><path d="M1.5 5.5H14.5M1.5 10.5H14.5M8 1V15" /></Svg>
      </button>
      <button type="button" aria-label="写作模式" className="ml-[10px]">
        <Svg w={16}><path d="M12 0.8L15.4 3.5L7.5 12L1 15L3.5 9ZM3.5 9L7.5 12M12.5 6L6.5 8.5M1 15.4H15.5" /></Svg>
      </button>
      <VSep className="ml-[14px]" />
      <button type="button" aria-label="适应页面" className="ml-[15px]">
        <Svg w={14}><path d="M0.6 4V0.6H4M10 0.6H13.4V4M13.4 10V13.4H10M4 13.4H0.6V10M4 3.8H10V10.2H4Z" /></Svg>
      </button>
      <button type="button" className="ml-[7px] flex items-center gap-[5px] text-[13px]">100% <Caret /></button>
      <button type="button" aria-label="缩小" className="ml-[11px]"><Svg w={10} h={10} sw={2}><path d="M0 5H10" /></Svg></button>
      <input
        type="range"
        aria-label="显示比例"
        defaultValue={50}
        className="ml-[12px] h-3 w-[138px] appearance-none bg-transparent [&::-webkit-slider-runnable-track]:h-3 [&::-webkit-slider-runnable-track]:bg-[linear-gradient(to_right,#3a4560_50%,#cfd3db_50%)] [&::-webkit-slider-runnable-track]:bg-[length:100%_1px] [&::-webkit-slider-runnable-track]:bg-center [&::-webkit-slider-runnable-track]:bg-no-repeat [&::-webkit-slider-thumb]:h-3 [&::-webkit-slider-thumb]:w-3 [&::-webkit-slider-thumb]:appearance-none [&::-webkit-slider-thumb]:rounded-full [&::-webkit-slider-thumb]:border [&::-webkit-slider-thumb]:border-[#4a4f5a] [&::-webkit-slider-thumb]:bg-[#f5f7f9]"
      />
      <button type="button" aria-label="放大" className="ml-[12px]"><Svg w={10} h={10} sw={2}><path d="M0 5H10M5 0V10" /></Svg></button>
      <button type="button" aria-label="全屏" className="ml-[13px]">
        <Svg w={14}><path d="M0.6 4.5V0.6H4.5M0.6 0.6L5 5M9.5 0.6H13.4V4.5M13.4 0.6L9 5M13.4 9.5V13.4H9.5M13.4 13.4L9 9M4.5 13.4H0.6V9.5M0.6 13.4L5 9" /></Svg>
      </button>
    </div>
  </footer>
);

const Watermark = () => (
  <div className="pointer-events-none absolute right-[11px] bottom-2 flex items-end opacity-85">
    <svg width="44" height="42" viewBox="0 0 44 42" className="shrink-0" aria-hidden="true">
      <defs>
        <linearGradient id="sw1" x1="0" y1="1" x2="1" y2="0">
          <stop offset="0" stopColor="#3567c4" /><stop offset="1" stopColor="#55c3ee" />
        </linearGradient>
        <linearGradient id="sw2" x1="0" y1="1" x2="1" y2="0">
          <stop offset="0" stopColor="#efe14a" /><stop offset=".5" stopColor="#7cc94f" /><stop offset="1" stopColor="#34b06a" />
        </linearGradient>
      </defs>
      <path d="M43 1C26 0 2 10 1 26C1 30 4 32 9 32C5 28 6 22 12 16C19 8 30 3 43 1Z" fill="url(#sw1)" />
      <path d="M34 12C24 9 10 18 11 26C12 32 20 31 24 27C20 28 16 27 17 23C19 17 27 12 34 12Z" fill="url(#sw1)" />
      <path d="M22 18C28 14 34 16 33 21C31 29 20 36 4 39C20 42 40 34 42 22C43 14 32 12 22 18Z" fill="url(#sw2)" />
      <path d="M18 23C20 19 25 18 25 21C25 24 20 27 17 26Z" fill="url(#sw1)" />
    </svg>
    <div className="flex flex-col whitespace-nowrap">
      <span className="text-[21px] leading-[26px] font-bold text-[#5b9bd8]">极光下载站</span>
      <span className="font-['Liberation_Sans',sans-serif] text-[16px] leading-[18px] font-bold text-[#5cc774]">www.xz7.com</span>
    </div>
  </div>
);

export default function App() {
  return (
    <div className="relative flex h-screen min-h-[640px] flex-col overflow-hidden bg-[#f5f7f9] font-['Noto_Sans','Noto_Sans_CJK_SC',sans-serif] text-[12px] leading-4 text-[#2b3345]">
      <TitleBar />
      <div className="z-10 shrink-0 bg-white shadow-[0_1px_4px_rgba(0,0,0,0.18)]">
        <MenuBar />
        <Ribbon />
      </div>
      <div className="flex min-h-0 flex-1">
        <main className="flex min-w-0 flex-1 justify-center overflow-hidden pt-[19px]">
          <Page />
        </main>
        <ScrollBar />
        <PropsPanel />
        <SideBar />
      </div>
      <StatusBar />
      <Watermark />
    </div>
  );
}
